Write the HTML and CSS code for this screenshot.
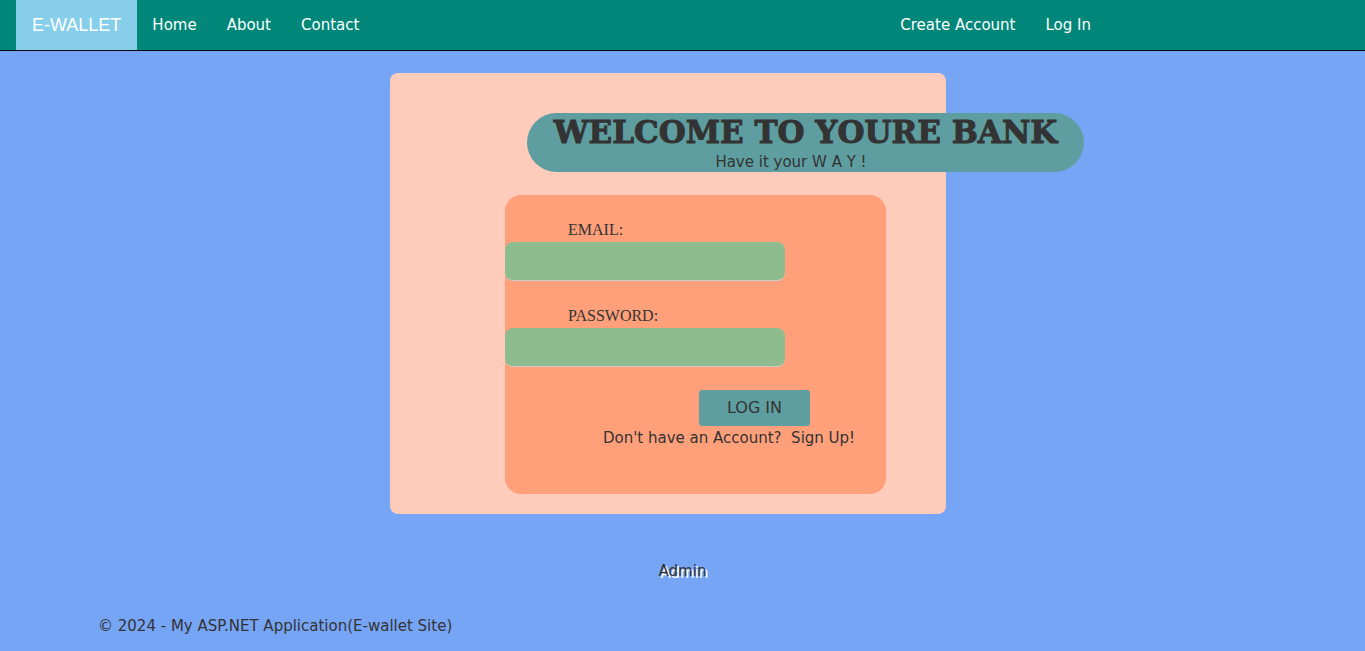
FILE: index.html
```html
<!DOCTYPE html>
<html lang="en">
<head>
<meta charset="utf-8">
<title>E-Wallet</title>
<link rel="stylesheet" href="styles.css">
</head>
<body>
<header class="navbar">
  <nav class="nav-links">
    <a class="brand" href="#">E-WALLET</a>
    <a href="#">Home</a>
    <a href="#">About</a>
    <a href="#">Contact</a>
  </nav>
  <nav class="nav-links">
    <a href="#">Create Account</a>
    <a href="#">Log In</a>
  </nav>
</header>
<main class="page">
  <section class="card">
    <div class="banner">
      <h1 class="title">WELCOME TO YOURE BANK</h1>
      <p class="tagline">Have it your W A Y !</p>
    </div>
    <form class="login">
      <label class="label" for="email">EMAIL:</label>
      <input class="field" id="email" type="email">
      <label class="label" for="password">PASSWORD:</label>
      <input class="field" id="password" type="password">
      <button class="submit" type="button">LOG IN</button>
      <p class="signup">Don't have an Account?&nbsp; <a href="#">Sign Up!</a></p>
    </form>
  </section>
  <a class="admin" href="#">Admin</a>
</main>
<footer class="footer">© 2024 - My ASP.NET Application(E-wallet Site)</footer>
</body>
</html>
```

FILE: styles.css
```css
* { box-sizing: border-box; }
body {
  margin: 0;
  background: #77a5f6;
  color: #333;
  font: 15px/20px Verdana, "DejaVu Sans", sans-serif;
}
a { color: inherit; text-decoration: none; }
h1, p { margin: 0; }
.navbar {
  display: flex;
  justify-content: space-between;
  padding: 0 259px 0 16px;
  background: #008779;
  border-bottom: 1px solid #080808;
  color: #fff;
}
.nav-links { display: flex; }
.nav-links a { padding: 15px; }
.nav-links .brand {
  padding: 15px 16px;
  background: #87ceeb;
  font: 18px/20px "Liberation Sans", Arial, sans-serif;
}
.page {
  display: flex;
  flex-direction: column;
  align-items: center;
  padding-top: 22px;
}
.card {
  width: 556px;
  margin-right: 29px;
  padding: 40px 0 20px 115px;
  border-radius: 8px;
  background: #ffcbba;
}
.banner {
  width: 557px;
  margin-left: 22px;
  border-radius: 30px;
  background: #5f9ea0;
  text-align: center;
}
.title {
  font: 900 31px/39px "Cooper Black", "DejaVu Serif", serif;
  -webkit-text-stroke: 1px #333;
  white-space: nowrap;
}
.tagline { padding-right: 29px; }
.login {
  display: flex;
  flex-direction: column;
  align-items: flex-start;
  width: 381px;
  margin-top: 23px;
  padding: 23px 0 46px;
  border-radius: 16px;
  background: #ffa07a;
}
.label {
  margin-left: 63px;
  padding: 2px 0;
  font: 16px/20px "Liberation Serif", serif;
}
.field {
  width: 280px;
  height: 39px;
  margin-bottom: 23px;
  padding: 6px 12px;
  border: 0;
  border-bottom: 1px solid #ccc;
  border-radius: 8px;
  background: #8fbc8f;
  font: inherit;
}
.submit {
  width: 111px;
  height: 36px;
  margin-left: 194px;
  padding: 0;
  border: 0;
  border-radius: 3px;
  background: #5f9ea0;
  color: #333;
  font: 16px/20px Verdana, "DejaVu Sans", sans-serif;
}
.signup { padding: 2px 0 0 98px; white-space: nowrap; }
.admin { margin-top: 47px; text-shadow: 2px 2px #fff; }
.footer { padding: 35px 98px 0; }
```
